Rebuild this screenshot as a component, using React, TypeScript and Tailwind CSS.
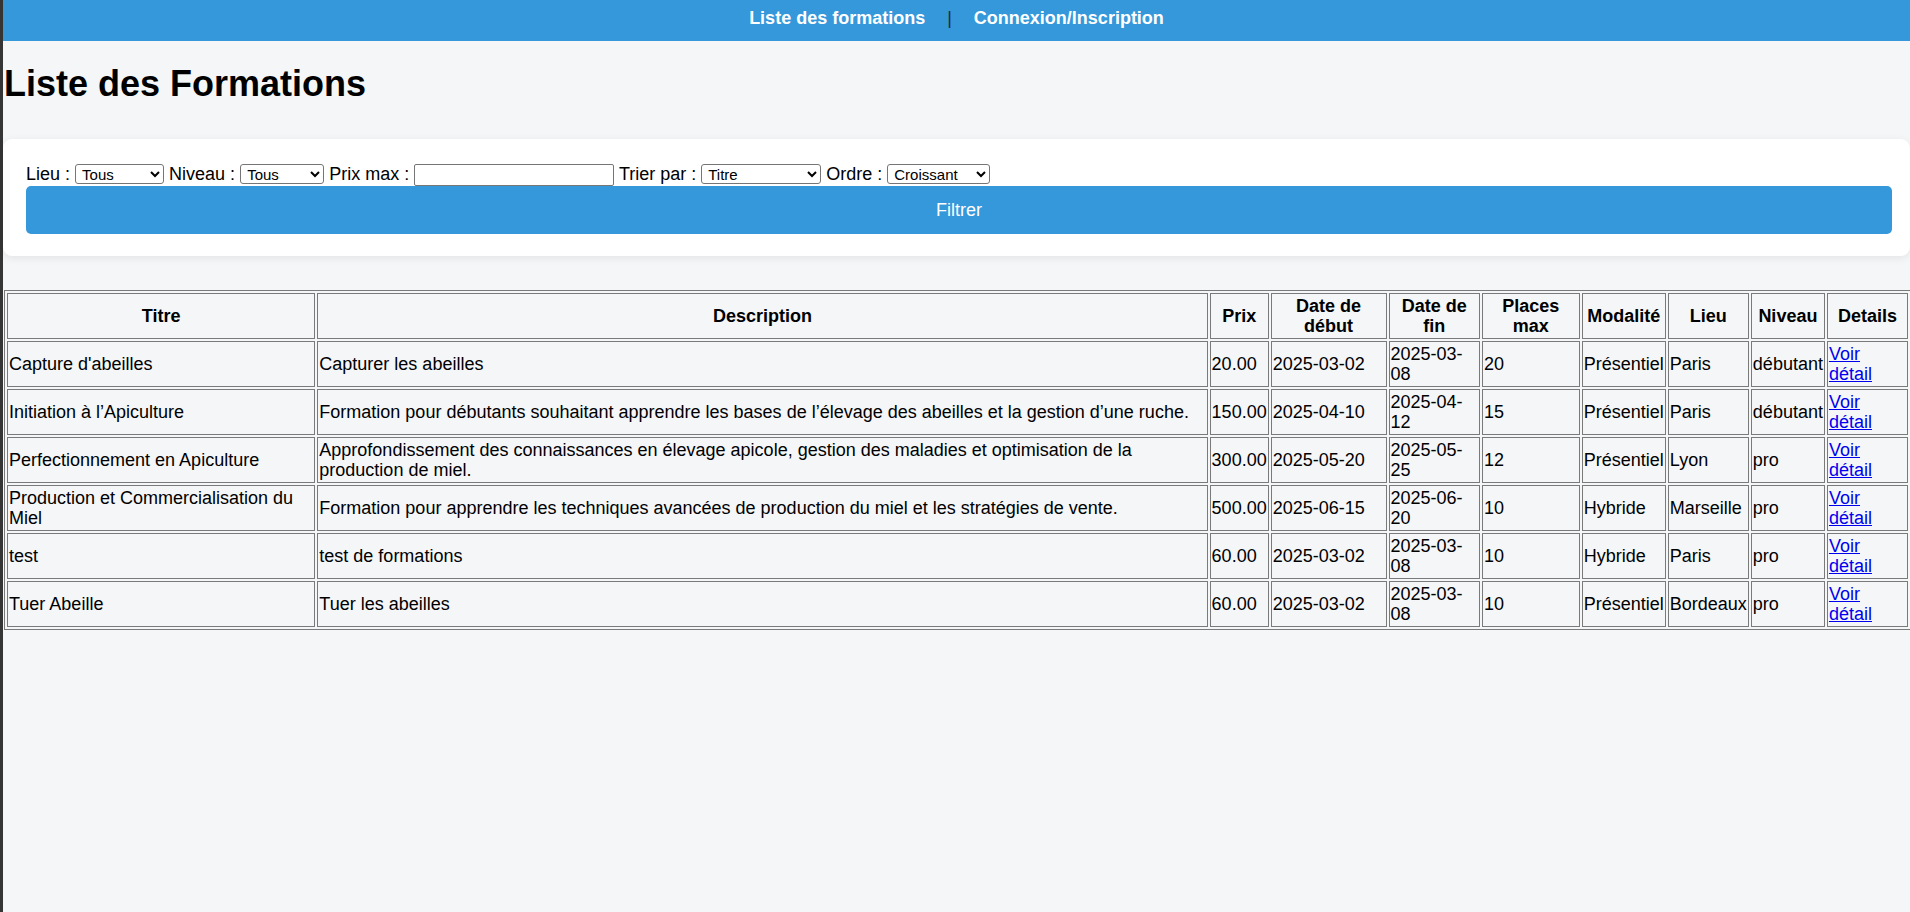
import { useState } from 'react'

type Formation = {
  titre: string
  description: string
  prix: string
  debut: string
  fin: string
  places: number
  modalite: string
  lieu: string
  niveau: string
}

const formations: Formation[] = [
  {
    titre: "Capture d'abeilles",
    description: 'Capturer les abeilles',
    prix: '20.00',
    debut: '2025-03-02',
    fin: '2025-03-08',
    places: 20,
    modalite: 'Présentiel',
    lieu: 'Paris',
    niveau: 'débutant',
  },
  {
    titre: 'Initiation à l’Apiculture',
    description:
      'Formation pour débutants souhaitant apprendre les bases de l’élevage des abeilles et la gestion d’une ruche.',
    prix: '150.00',
    debut: '2025-04-10',
    fin: '2025-04-12',
    places: 15,
    modalite: 'Présentiel',
    lieu: 'Paris',
    niveau: 'débutant',
  },
  {
    titre: 'Perfectionnement en Apiculture',
    description:
      'Approfondissement des connaissances en élevage apicole, gestion des maladies et optimisation de la production de miel.',
    prix: '300.00',
    debut: '2025-05-20',
    fin: '2025-05-25',
    places: 12,
    modalite: 'Présentiel',
    lieu: 'Lyon',
    niveau: 'pro',
  },
  {
    titre: 'Production et Commercialisation du Miel',
    description: 'Formation pour apprendre les techniques avancées de production du miel et les stratégies de vente.',
    prix: '500.00',
    debut: '2025-06-15',
    fin: '2025-06-20',
    places: 10,
    modalite: 'Hybride',
    lieu: 'Marseille',
    niveau: 'pro',
  },
  {
    titre: 'test',
    description: 'test de formations',
    prix: '60.00',
    debut: '2025-03-02',
    fin: '2025-03-08',
    places: 10,
    modalite: 'Hybride',
    lieu: 'Paris',
    niveau: 'pro',
  },
  {
    titre: 'Tuer Abeille',
    description: 'Tuer les abeilles',
    prix: '60.00',
    debut: '2025-03-02',
    fin: '2025-03-08',
    places: 10,
    modalite: 'Présentiel',
    lieu: 'Bordeaux',
    niveau: 'pro',
  },
]

const selectClass =
  'h-[20px] rounded-[3px] border border-[#767676] bg-white pl-[2px] align-baseline text-[15px] text-black'
const thClass = 'border border-[#7a7a7a] p-[1px] text-center align-middle font-bold'
const tdClass = 'border border-[#7a7a7a] p-[1px] text-left align-middle'

export default function App() {
  const [prixMax, setPrixMax] = useState('')

  return (
    <div className="flex min-h-screen overflow-hidden font-['Liberation_Sans',Arial,sans-serif] text-[18px] text-black">
      <div className="w-[3px] shrink-0 bg-[#353535]" />

      <div className="flex min-w-0 flex-1 flex-col bg-[#f4f6f8]">
        <nav className="flex h-[41px] items-center justify-center bg-[#3498db] pb-[5px] font-bold">
          <a href="#" className="mx-[22px] text-white no-underline">
            Liste des formations
          </a>
          <span className="font-normal text-[#1c2b2b]">|</span>
          <a href="#" className="mx-[22px] text-white no-underline">
            Connexion/Inscription
          </a>
        </nav>

        <h1 className="mt-[22px] mb-[24px] pl-[1px] text-[36px] leading-[1.15] font-bold">Liste des Formations</h1>

        <div className="mt-[11px] rounded-[9px] bg-white pt-[23px] pr-[18px] pb-[22px] pl-[23px] shadow-[0_2px_8px_rgba(0,0,0,0.08)]">
          <form onSubmit={(e) => e.preventDefault()}>
            <div className="leading-[24px]">
              <label>Lieu :</label>{' '}
              <select className={`${selectClass} w-[89px]`} defaultValue="">
                <option value="">Tous</option>
                <option>Paris</option>
                <option>Lyon</option>
                <option>Marseille</option>
                <option>Bordeaux</option>
              </select>{' '}
              <label>Niveau :</label>{' '}
              <select className={`${selectClass} w-[84px]`} defaultValue="">
                <option value="">Tous</option>
                <option>débutant</option>
                <option>pro</option>
              </select>{' '}
              <label>Prix max :</label>{' '}
              <input
                type="number"
                value={prixMax}
                onChange={(e) => setPrixMax(e.target.value)}
                className="h-[22px] w-[200px] rounded-[2px] border border-[#767676] bg-white px-[2px] align-baseline text-[15px]"
              />{' '}
              <label>Trier par :</label>{' '}
              <select className={`${selectClass} w-[120px]`} defaultValue="titre">
                <option value="titre">Titre</option>
                <option value="prix">Prix</option>
                <option value="date">Date de début</option>
              </select>{' '}
              <label>Ordre :</label>{' '}
              <select className={`${selectClass} w-[103px]`} defaultValue="asc">
                <option value="asc">Croissant</option>
                <option value="desc">Décroissant</option>
              </select>
            </div>
            <button
              type="submit"
              className="block h-[48px] w-full rounded-[5px] bg-[#3498db] text-[18px] text-white"
            >
              Filtrer
            </button>
          </form>
        </div>

        <table className="mt-[34px] ml-[1px] w-[1907px] border-separate border-spacing-[2px] border border-[#7a7a7a] leading-[1.15]">
          <thead>
            <tr className="h-[46px]">
              <th className={thClass}>Titre</th>
              <th className={thClass}>Description</th>
              <th className={thClass}>Prix</th>
              <th className={thClass}>Date de début</th>
              <th className={thClass}>Date de fin</th>
              <th className={thClass}>Places max</th>
              <th className={thClass}>Modalité</th>
              <th className={thClass}>Lieu</th>
              <th className={thClass}>Niveau</th>
              <th className={thClass}>Details</th>
            </tr>
          </thead>
          <tbody>
            {formations.map((f) => (
              <tr key={f.titre} className="h-[46px]">
                <td className={tdClass}>{f.titre}</td>
                <td className={tdClass}>{f.description}</td>
                <td className={tdClass}>{f.prix}</td>
                <td className={tdClass}>{f.debut}</td>
                <td className={tdClass}>{f.fin}</td>
                <td className={tdClass}>{f.places}</td>
                <td className={tdClass}>{f.modalite}</td>
                <td className={tdClass}>{f.lieu}</td>
                <td className={tdClass}>{f.niveau}</td>
                <td className={tdClass}>
                  <a href="#" className="text-[#0000ee] underline">
                    Voir détail
                  </a>
                </td>
              </tr>
            ))}
          </tbody>
        </table>
      </div>
    </div>
  )
}
